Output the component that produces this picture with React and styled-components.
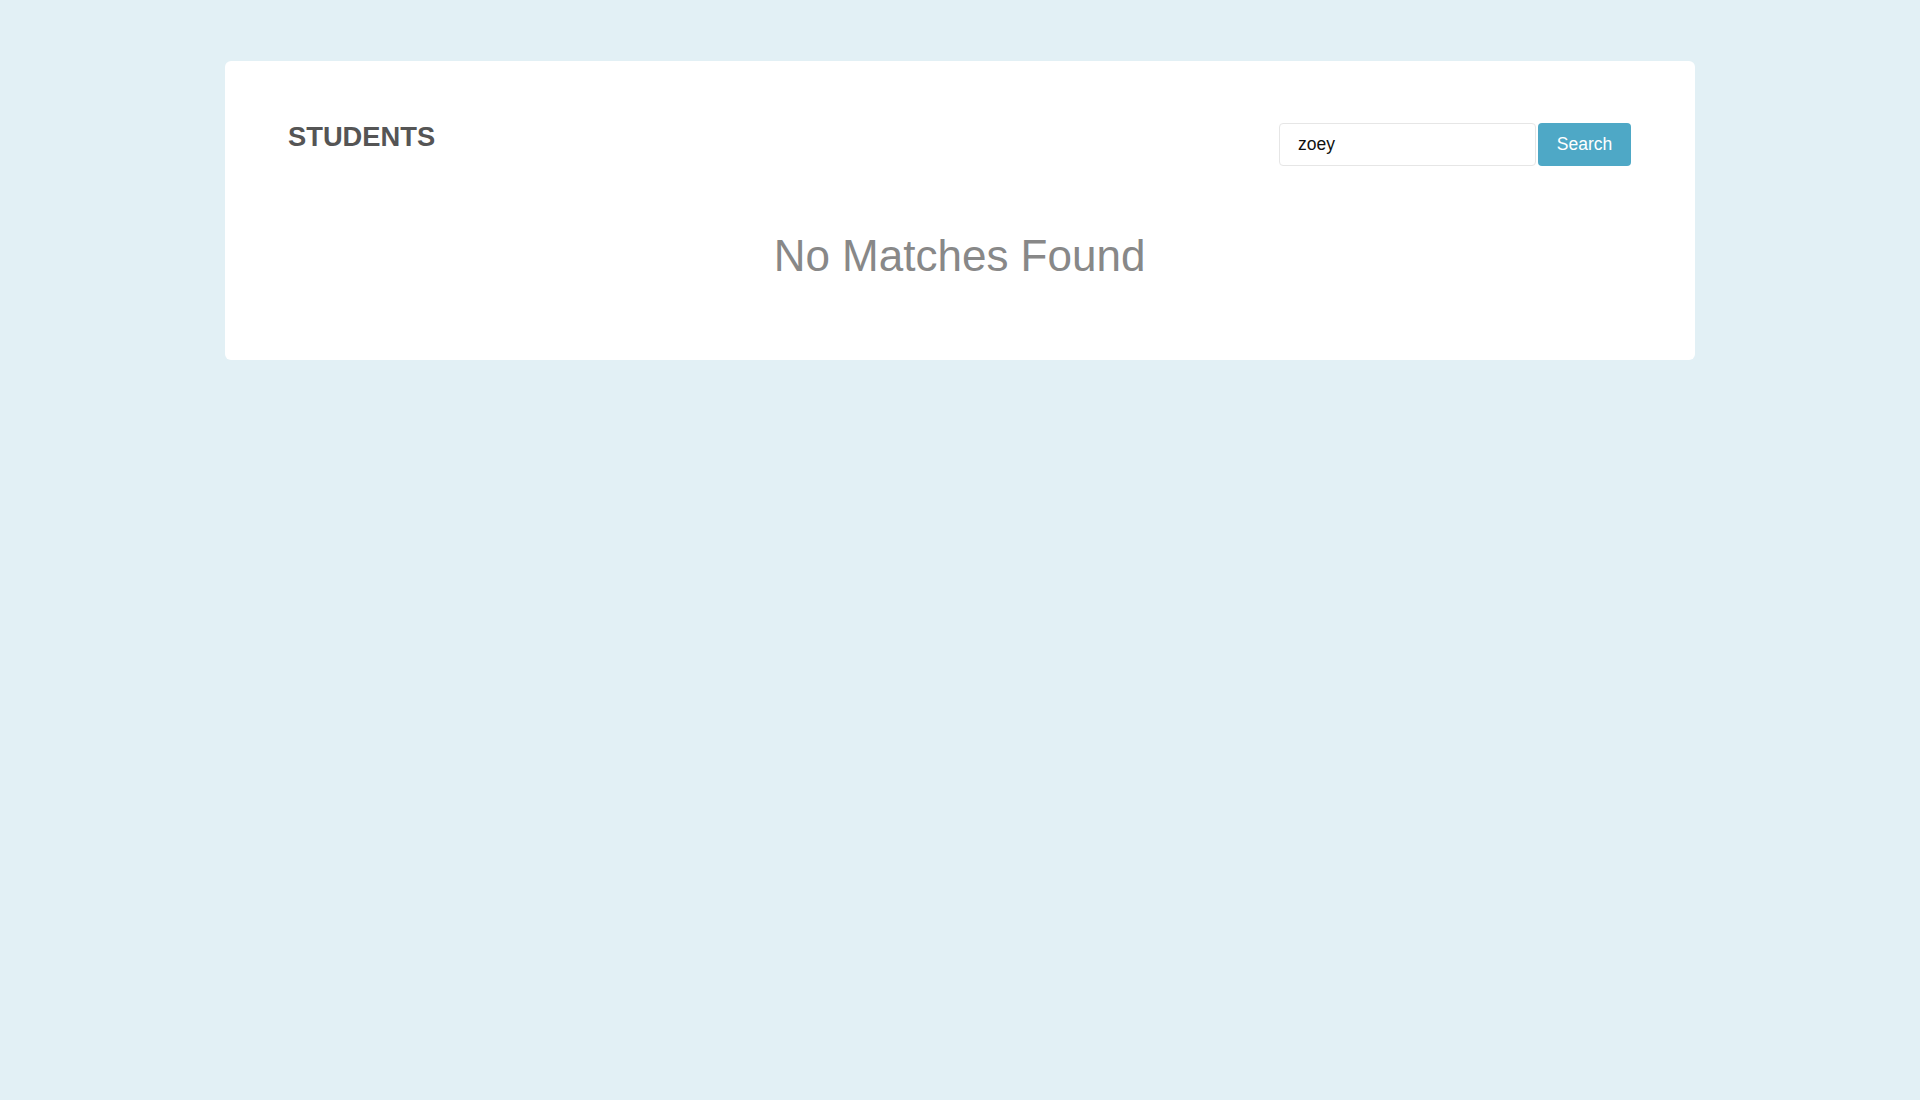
import React, { useState } from 'react';
import styled, { createGlobalStyle } from 'styled-components';

const GlobalStyle = createGlobalStyle`
  html, body {
    margin: 0;
    padding: 0;
    background: #e2f0f5;
    font-family: "Liberation Sans", Arial, sans-serif;
  }
`;

const Page = styled.div`
  min-height: 1100px;
  padding-top: 61px;
  box-sizing: border-box;
`;

const Card = styled.div`
  width: 1470px;
  margin: 0 auto;
  background: #fff;
  border-radius: 6px;
  padding: 62px 64px 64px 63px;
  box-sizing: border-box;
`;

const Header = styled.div`
  display: flex;
  justify-content: space-between;
  align-items: flex-start;
`;

const Title = styled.h1`
  margin: 0;
  font-size: 27.3px;
  line-height: 27px;
  font-weight: bold;
  color: #555;
`;

const SearchForm = styled.form`
  display: flex;
  gap: 2px;
`;

const Input = styled.input`
  width: 257px;
  height: 43px;
  box-sizing: border-box;
  border: 1px solid #e6e6e6;
  border-radius: 4px;
  padding: 0 18px;
  font-family: inherit;
  font-size: 17.5px;
  color: #111;
  outline: none;
`;

const Button = styled.button`
  width: 93px;
  height: 43px;
  border: none;
  border-radius: 4px;
  background: #4ea8c6;
  color: #fff;
  font-family: inherit;
  font-size: 17.5px;
  cursor: pointer;
`;

const Message = styled.p`
  margin: 68px 0 18px;
  text-align: center;
  font-size: 44px;
  line-height: 44px;
  color: #888;
`;

export default function App() {
  const [query, setQuery] = useState('zoey');
  return (
    <Page>
      <GlobalStyle />
      <Card>
        <Header>
          <Title>STUDENTS</Title>
          <SearchForm onSubmit={e => e.preventDefault()}>
            <Input value={query} onChange={e => setQuery(e.target.value)} />
            <Button type="submit">Search</Button>
          </SearchForm>
        </Header>
        <Message>No Matches Found</Message>
      </Card>
    </Page>
  );
}
